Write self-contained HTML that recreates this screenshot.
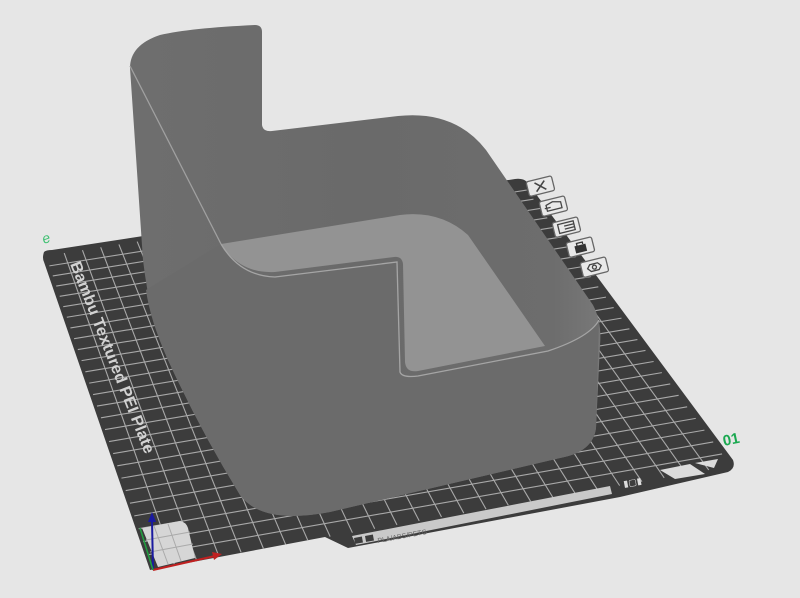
<!DOCTYPE html>
<html><head><meta charset="utf-8"><style>
html,body{margin:0;padding:0;background:#e6e6e6;width:800px;height:598px;overflow:hidden}
svg{display:block}
</style></head><body>
<svg id="s" width="800" height="598" viewBox="0 0 800 598" xmlns="http://www.w3.org/2000/svg">
<rect width="800" height="598" fill="#e6e6e6"/>
<!-- plate -->
<path d="M44,252 Q42,258 44,262 L150,570 L325,537 L348,548 L620,497 L728,472 Q736,468 733,460 L527,182 Q523,178 515,179 L52,250 Q46,250 44,252 Z" fill="#3c3c3c"/>
<g id="grid" stroke="#a9a9a9" stroke-width="1.1" fill="none"></g>
<path d="M352,536 L610,486 L612,494 L356,545 Z" fill="#d8d8d8" opacity="0.9"/>
<rect x="354" y="538" width="8" height="6" fill="#3c3c3c" transform="rotate(-10.5 354 538)"/>
<rect x="365" y="536" width="8" height="6" fill="#3c3c3c" transform="rotate(-10.5 365 536)"/>
<text x="378" y="543" font-family="Liberation Sans, sans-serif" font-size="7" fill="#666" transform="rotate(-10.5 378 543)">PLA/ABS/PETG</text>
<path d="M660,470 L690,464 L705,474 L675,479 Z" fill="#dcdcdc"/>
<path d="M695,463 L718,459 L714,468 Z" fill="#dcdcdc"/>
<text x="624" y="487" font-family="Liberation Sans, sans-serif" font-size="9" fill="#ddd" transform="rotate(-10.5 624 487)">▮▢▮</text>
<!-- white origin square -->
<path d="M142,528 L180,521 Q186,522 188,528 L195,558 L158,567 Z" fill="#d6d6d6"/>
<g stroke="#aaa" stroke-width="1"><line x1="154" y1="526" x2="168" y2="564"/><line x1="168" y1="524" x2="181" y2="561"/><line x1="146" y1="540" x2="190" y2="532"/><line x1="150" y1="552" x2="193" y2="544"/></g>
<!-- text -->
<text x="0" y="0" font-family="Liberation Sans Narrow, Liberation Sans, sans-serif" font-weight="bold" font-size="20" fill="#d2d2d2" transform="translate(70,264) rotate(68.5) scale(1,0.8)" textLength="205" lengthAdjust="spacingAndGlyphs">Bambu Textured PEI Plate</text>
<!-- axes -->
<line x1="153" y1="570" x2="152" y2="520" stroke="#1a1aa0" stroke-width="2"/>
<path d="M148,522 L152,512 L156,522 Z" fill="#1a1aa0"/>
<line x1="153" y1="570" x2="215" y2="556" stroke="#c02020" stroke-width="2"/>
<path d="M212,552 L222,554 L214,560 Z" fill="#c02020"/>
<line x1="153" y1="570" x2="140" y2="528" stroke="#20a040" stroke-width="1.5"/>
<!-- green labels -->
<text x="724" y="446" font-family="Liberation Sans, sans-serif" font-weight="bold" font-size="15" fill="#1aa850" transform="rotate(-12 724 446)">01</text>
<text x="44" y="244" font-family="Liberation Sans, sans-serif" font-style="italic" font-size="14" fill="#3cc070" transform="rotate(-20 44 244)">e</text>
<!-- icons -->
<g fill="none" stroke="#666" stroke-width="1.3">
<g transform="translate(526,182) rotate(-14)"><rect x="0" y="0" width="26" height="15" rx="2" fill="#e8e8e8"/><path d="M8,3 L18,12 M18,3 L8,12" stroke="#444" stroke-width="1.6"/></g>
<g transform="translate(539,202) rotate(-14)"><rect x="0" y="0" width="26" height="15" rx="2" fill="#e8e8e8"/><path d="M6,5 L13,3 L21,5 L21,11 L6,11 Z M4,8 L10,8" stroke="#444"/></g>
<g transform="translate(552,223) rotate(-14)"><rect x="0" y="0" width="26" height="15" rx="2" fill="#e8e8e8"/><rect x="5" y="3" width="16" height="9" stroke="#444"/><path d="M11,6 L21,6 M11,9 L21,9" stroke="#444"/></g>
<g transform="translate(566,243) rotate(-14)"><rect x="0" y="0" width="26" height="15" rx="2" fill="#e8e8e8"/><rect x="8" y="6" width="10" height="6" fill="#333" stroke="#333"/><path d="M10,6 V3 H16 V5" stroke="#333"/></g>
<g transform="translate(580,263) rotate(-14)"><rect x="0" y="0" width="26" height="15" rx="2" fill="#e8e8e8"/><path d="M9,4 L17,4 L20,7.5 L17,11 L9,11 L6,7.5 Z" stroke="#444"/><circle cx="13" cy="7.5" r="2" stroke="#444"/></g>
</g>
<!-- object -->
<defs>
<linearGradient id="w" x1="0" x2="1"><stop offset="0" stop-color="#6e6e6e"/><stop offset="0.5" stop-color="#6a6a6a"/><stop offset="0.9" stop-color="#6d6d6d"/><stop offset="1" stop-color="#787878"/></linearGradient>
</defs>
<path d="M130,68 Q130,45 160,35 Q190,28 255,25 Q262,25 262,32 L262,125 Q263,132 272,131 L398,116 Q455,110 486,150 L593,305 Q602,322 600,345 L596,428 Q593,452 560,458 L330,512 Q262,525 240,495 Q200,430 168,360 Q150,320 143,260 Z" fill="url(#w)"/>
<!-- floor -->
<path d="M221,244 L400,215 Q440,210 468,235 L545,346 L418,371 Q406,373 405,362 L403,264 Q402,256 394,257 L275,272 Q240,274 221,244 Z" fill="#939393"/>
<!-- back wall rim -->
<path d="M130,66 L221,244" fill="none" stroke="#a0a0a0" stroke-width="1.3"/>
<!-- front walls -->
<path d="M221,244 Q240,276 275,277 L397,262 L400,372 Q402,378 418,376 L548,351 Q590,337 599,320 L596,428 Q593,452 560,458 L330,512 Q262,525 240,495 Q200,430 168,360 Q150,320 146,290 Z" fill="#6b6b6b"/>
<path d="M221,244 Q240,276 275,277 L397,262 L400,372 Q402,378 418,376 L548,351 Q590,337 599,320" fill="none" stroke="#a5a5a5" stroke-width="1.3"/>
</svg>
<script>
(function(){
var g=document.getElementById('grid');
var A=[46,256],B=[520,181],C=[731,466],D=[152,568];
function lerp(p,q,t){return [p[0]+(q[0]-p[0])*t,p[1]+(q[1]-p[1])*t];}
var n=26,m=27,h='';
function tv(i,k){var t=i/k;return t*(0.85+0.15*t);}
for(var i=1;i<n;i++){var t=i/n;var p=lerp(A,B,t),q=lerp(D,C,t);h+='<line x1="'+p[0]+'" y1="'+p[1]+'" x2="'+q[0]+'" y2="'+q[1]+'"/>';}
for(var j=1;j<m;j++){var t=tv(j,m);var p=lerp(A,D,t),q=lerp(B,C,t);h+='<line x1="'+p[0]+'" y1="'+p[1]+'" x2="'+q[0]+'" y2="'+q[1]+'"/>';}
g.innerHTML=h;
})();
</script>
</body></html>
